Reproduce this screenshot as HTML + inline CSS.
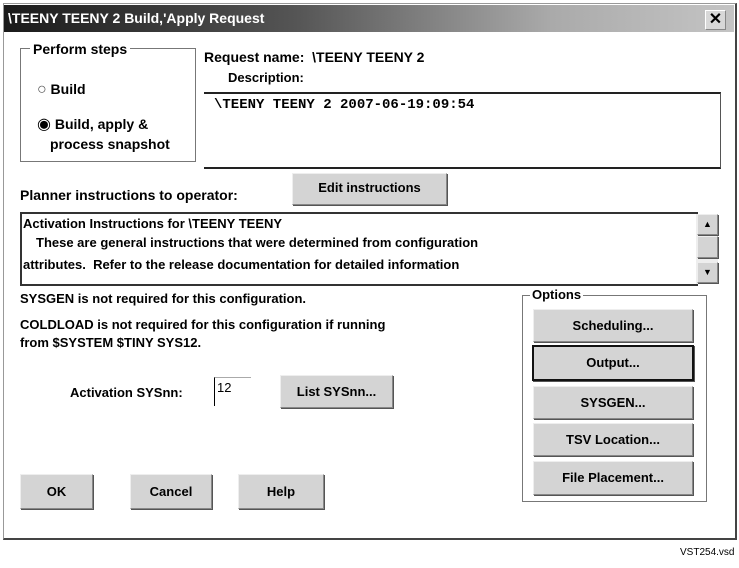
<!DOCTYPE html>
<html><head><style>
body{margin:0;width:739px;height:568px;background:#fff;position:relative;overflow:hidden;font-family:"Liberation Sans",Arial,sans-serif;font-weight:bold;font-size:13px;color:#000}
.a{position:absolute;white-space:nowrap}
.btn{position:absolute;background:#d4d4d4;border:1px solid #888;border-top-color:#eee;border-left-color:#eee;box-shadow:1px 1px 0 #555;text-align:center;font-size:13px}
.box{position:absolute;border:1px solid #777}
</style></head><body>
<div class="a" style="left:3px;top:3px;width:731px;height:534px;border:1px solid #999;border-right:2px solid #444;border-bottom:2px solid #444"></div>
<div class="a" style="left:4px;top:5px;width:730px;height:27px;background:linear-gradient(90deg,#1a1a1a 0%,#555 40%,#aaa 75%,#c4c4c4 100%)"></div>
<div class="a" style="left:8px;top:10px;color:#fff;font-size:14px">\TEENY TEENY 2 Build,'Apply Request</div>
<div class="a" style="left:705px;top:10px;width:19px;height:18px;background:#d8d8d8;border:1px solid #888;border-top-color:#fff;border-left-color:#fff;text-align:center;font-size:16px;line-height:18px">✕</div>

<div class="box" style="left:20px;top:48px;width:174px;height:112px"></div>
<div class="a" style="left:30px;top:41px;background:#fff;padding:0 3px;font-size:14px">Perform steps</div>
<div class="a" style="left:37px;top:81px;font-size:14px"><span style="font-weight:normal;color:#555;font-size:16px">○</span> Build</div>
<div class="a" style="left:37px;top:114px;font-size:14px"><span style="font-weight:normal;font-size:16px">◉</span> Build, apply &amp;</div>
<div class="a" style="left:50px;top:136px;font-size:14px">process snapshot</div>

<div class="a" style="left:204px;top:49px;font-size:14px">Request name:&nbsp; \TEENY TEENY 2</div>
<div class="a" style="left:204px;top:92px;width:516px;height:73px;border-top:2px solid #222;border-bottom:2px solid #222;border-right:1px solid #555"></div>
<div class="a" style="left:224px;top:70px;font-size:13px;background:#fff;padding:0 4px 3px">Description:</div>
<div class="a" style="left:214px;top:97px;font-family:'Liberation Mono',monospace;font-size:14px">\TEENY TEENY 2 2007-06-19:09:54</div>

<div class="a" style="left:20px;top:187px;font-size:14px">Planner instructions to operator:</div>
<div class="btn" style="left:292px;top:173px;width:153px;height:30px;line-height:28px">Edit instructions</div>

<div class="a" style="left:20px;top:212px;width:674px;height:70px;border:2px solid #333"></div>
<div class="a" style="left:23px;top:216px">Activation Instructions for \TEENY TEENY</div>
<div class="a" style="left:36px;top:235px">These are general instructions that were determined from configuration</div>
<div class="a" style="left:23px;top:257px">attributes.&nbsp; Refer to the release documentation for detailed information</div>
<div class="a" style="left:696px;top:214px;width:22px;height:70px;background:#eee"></div>
<div class="btn" style="left:697px;top:214px;width:19px;height:19px;font-size:9px;line-height:19px">▲</div>
<div class="btn" style="left:697px;top:236px;width:19px;height:20px"></div>
<div class="btn" style="left:697px;top:262px;width:19px;height:19px;font-size:9px;line-height:19px">▼</div>

<div class="a" style="left:20px;top:291px">SYSGEN is not required for this configuration.</div>
<div class="a" style="left:20px;top:317px">COLDLOAD is not required for this configuration if running</div>
<div class="a" style="left:20px;top:335px">from $SYSTEM $TINY SYS12.</div>

<div class="a" style="left:70px;top:385px">Activation SYSnn:</div>
<div class="a" style="left:214px;top:377px;width:34px;height:28px;border-left:1px solid #000;border-top:1px solid #aaa;font-weight:normal;font-size:13px;padding-left:2px;line-height:20px">12</div>
<div class="btn" style="left:280px;top:375px;width:111px;height:31px;line-height:31px">List SYSnn...</div>

<div class="box" style="left:522px;top:295px;width:183px;height:205px"></div>
<div class="a" style="left:530px;top:287px;background:#fff;padding:0 2px">Options</div>
<div class="btn" style="left:533px;top:309px;width:158px;height:31px;line-height:31px">Scheduling...</div>
<div class="btn" style="left:532px;top:345px;width:158px;height:32px;line-height:32px;border:2px solid #111">Output...</div>
<div class="btn" style="left:533px;top:386px;width:158px;height:31px;line-height:31px">SYSGEN...</div>
<div class="btn" style="left:533px;top:423px;width:158px;height:31px;line-height:31px">TSV Location...</div>
<div class="btn" style="left:533px;top:461px;width:158px;height:32px;line-height:32px">File Placement...</div>

<div class="btn" style="left:20px;top:474px;width:71px;height:33px;line-height:33px">OK</div>
<div class="btn" style="left:130px;top:474px;width:80px;height:33px;line-height:33px">Cancel</div>
<div class="btn" style="left:238px;top:474px;width:84px;height:33px;line-height:33px">Help</div>

<div class="a" style="left:680px;top:547px;font-weight:normal;font-size:10px">VST254.vsd</div>
</body></html>
